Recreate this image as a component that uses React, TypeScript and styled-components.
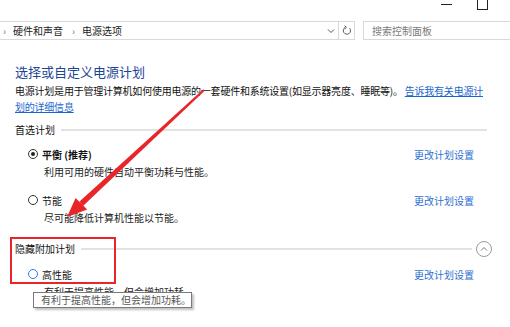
import React from 'react';
import styled, { createGlobalStyle } from 'styled-components';

const GlobalStyle = createGlobalStyle`
  html, body {
    margin: 0;
    padding: 0;
    background: #ffffff;
  }
  body {
    font-family: "Noto Sans CJK SC", "Noto Sans", sans-serif;
    color: #000;
  }
`;

type PlanProps = {
  name: string;
  desc: string;
  selected?: boolean;
  hover?: boolean;
  bold?: boolean;
  gap: number;
};

const Plan = ({ name, desc, selected, hover, bold, gap }: PlanProps) => (
  <PlanBox $gap={gap}>
    <PlanRow>
      <PlanLabel>
        <Radio $hover={hover}>{selected && <RadioDot />}</Radio>
        <PlanName $bold={bold}>{name}</PlanName>
      </PlanLabel>
      <ActionLink>更改计划设置</ActionLink>
    </PlanRow>
    <PlanDesc>{desc}</PlanDesc>
  </PlanBox>
);

const App = () => {
  return (
    <Window>
      <GlobalStyle />
      <TitleBar>
        <Minimize />
        <Maximize />
      </TitleBar>
      <Toolbar>
        <Address>
          <Crumbs>
            <Sep>›</Sep>
            <span>硬件和声音</span>
            <Sep>›</Sep>
            <span>电源选项</span>
          </Crumbs>
          <svg width="8" height="6" viewBox="0 0 8 6">
            <path d="M1 1.5 L4 4.5 L7 1.5" fill="none" stroke="#555" strokeWidth="1" />
          </svg>
        </Address>
        <Refresh>
          <svg width="10" height="11" viewBox="0 0 10 11">
            <path d="M7.6 3.2 A3.6 3.6 0 1 1 3.2 2.4" fill="none" stroke="#555" strokeWidth="1" />
            <path d="M2.6 0.6 L4.4 2.4 L2.6 4" fill="none" stroke="#555" strokeWidth="1" />
          </svg>
        </Refresh>
        <Search>搜索控制面板</Search>
      </Toolbar>

      <Main>
        <Heading>选择或自定义电源计划</Heading>
        <Intro>
          电源计划是用于管理计算机如何使用电源的一套硬件和系统设置(如显示器亮度、睡眠等)。
          <TextLink>
            告诉我有关电源计
            <br />
            划的详细信息
          </TextLink>
        </Intro>

        <SectionHeader $gap={7} $right={23}>
          <span>首选计划</span>
          <Rule />
        </SectionHeader>

        <Plan
          gap={7}
          selected
          bold
          name="平衡 (推荐)"
          desc="利用可用的硬件自动平衡功耗与性能。"
        />
        <Plan gap={10} name="节能" desc="尽可能降低计算机性能以节能。" />

        <SectionHeader $gap={14} $right={18}>
          <span>隐藏附加计划</span>
          <Rule />
          <CollapseButton>
            <svg width="8" height="6" viewBox="0 0 8 6">
              <path d="M1 4.5 L4 1.5 L7 4.5" fill="none" stroke="#777" strokeWidth="1" />
            </svg>
          </CollapseButton>
        </SectionHeader>

        <Plan gap={8} hover name="高性能" desc="有利于提高性能，但会增加功耗。" />
      </Main>

      <Tooltip>有利于提高性能，但会增加功耗。</Tooltip>
      <Highlight />
      <Arrow width="510" height="327" viewBox="0 0 510 327">
        <polygon points="204.7,90.7 203.3,89.3 79.5,201.6 83,206" fill="#e8262a" />
        <polygon points="67,217 75.6,198 87.2,209.4" fill="#e8262a" />
      </Arrow>
    </Window>
  );
};

export default App;

const Window = styled.div`
  position: relative;
  width: 510px;
  height: 327px;
  overflow: hidden;
  background: #fff;
`;

const TitleBar = styled.div`
  height: 21px;
  display: flex;
  justify-content: flex-end;
  align-items: flex-start;
  padding-right: 22px;
  gap: 25px;
`;

const Minimize = styled.span`
  display: block;
  width: 11px;
  height: 1px;
  margin-top: 4px;
  background: #222;
`;

const Maximize = styled.span`
  display: block;
  width: 9px;
  height: 9px;
  margin-top: -1px;
  border: 1px solid #222;
`;

const Toolbar = styled.div`
  display: flex;
  height: 19px;
  font-size: 10px;
  line-height: 17px;
`;

const Address = styled.div`
  width: 340px;
  margin-left: -1px;
  display: flex;
  align-items: center;
  justify-content: space-between;
  padding-right: 3px;
  box-sizing: border-box;
  border: 1px solid #d9d9d9;
  color: #222;
`;

const Crumbs = styled.div`
  display: flex;
  align-items: center;
  padding-left: 3px;
`;

const Sep = styled.span`
  color: #777;
  margin-right: 7px;
  margin-left: 0;
  &:not(:first-child) {
    margin-left: 9px;
  }
`;

const Refresh = styled.div`
  width: 16px;
  display: flex;
  align-items: center;
  justify-content: center;
  box-sizing: border-box;
  border-top: 1px solid #d9d9d9;
  border-bottom: 1px solid #d9d9d9;
  border-right: 1px solid #d9d9d9;
`;

const Search = styled.div`
  flex: 1;
  margin-left: 8px;
  padding-left: 8px;
  margin-right: -2px;
  box-sizing: border-box;
  border: 1px solid #d9d9d9;
  color: #7a7a7a;
`;

const Main = styled.main`
  padding-left: 15px;
  font-size: 10px;
`;

const Heading = styled.h1`
  margin: 24px 0 0;
  font-size: 13px;
  line-height: 16px;
  font-weight: normal;
  color: #1d4597;
`;

const Intro = styled.p`
  margin: 3px 0 0;
  line-height: 16px;
  color: #111;
  white-space: nowrap;
  letter-spacing: -0.22px;
`;

const TextLink = styled.a`
  color: #1a66cc;
  text-decoration: underline;
  margin-left: 2px;
`;

const SectionHeader = styled.div<{ $gap: number; $right: number }>`
  margin-top: ${(p) => p.$gap}px;
  padding-right: ${(p) => p.$right}px;
  height: 16px;
  line-height: 16px;
  display: flex;
  align-items: center;
  gap: 6px;
  color: #111;
`;

const Rule = styled.div`
  flex: 1;
  height: 2px;
  background: #e2e2e2;
`;

const CollapseButton = styled.div`
  width: 14px;
  height: 14px;
  border: 1px solid #9a9a9a;
  border-radius: 50%;
  display: flex;
  align-items: center;
  justify-content: center;
  margin-left: -2px;
`;

const PlanBox = styled.div<{ $gap: number }>`
  margin-top: ${(p) => p.$gap}px;
`;

const PlanRow = styled.div`
  display: flex;
  align-items: center;
  justify-content: space-between;
  height: 18px;
  padding-left: 13px;
  padding-right: 36px;
`;

const PlanLabel = styled.div`
  display: flex;
  align-items: center;
  gap: 4px;
`;

const Radio = styled.span<{ $hover?: boolean }>`
  width: 10px;
  height: 10px;
  box-sizing: border-box;
  border-radius: 50%;
  border: 1px solid ${(p) => (p.$hover ? '#2a7de1' : '#333')};
  display: flex;
  align-items: center;
  justify-content: center;
`;

const RadioDot = styled.span`
  width: 4px;
  height: 4px;
  border-radius: 50%;
  background: #222;
`;

const PlanName = styled.span<{ $bold?: boolean }>`
  font-weight: ${(p) => (p.$bold ? 700 : 400)};
  color: #111;
`;

const ActionLink = styled.a`
  color: #2d6fd0;
  cursor: pointer;
`;

const PlanDesc = styled.div`
  padding-left: 29px;
  line-height: 18px;
  color: #222;
`;

const Tooltip = styled.div`
  position: absolute;
  left: 33px;
  top: 292px;
  width: 159px;
  height: 16px;
  box-sizing: border-box;
  padding-left: 7px;
  font-size: 10px;
  line-height: 14px;
  color: #555;
  background: #fff;
  border: 1px solid #7a7a7a;
  box-shadow: 2px 2px 2px rgba(0, 0, 0, 0.25);
`;

const Highlight = styled.div`
  position: absolute;
  left: 10px;
  top: 237px;
  width: 106px;
  height: 47px;
  box-sizing: border-box;
  border: 2px solid #e8262a;
`;

const Arrow = styled.svg`
  position: absolute;
  left: 0;
  top: 0;
  pointer-events: none;
`;
